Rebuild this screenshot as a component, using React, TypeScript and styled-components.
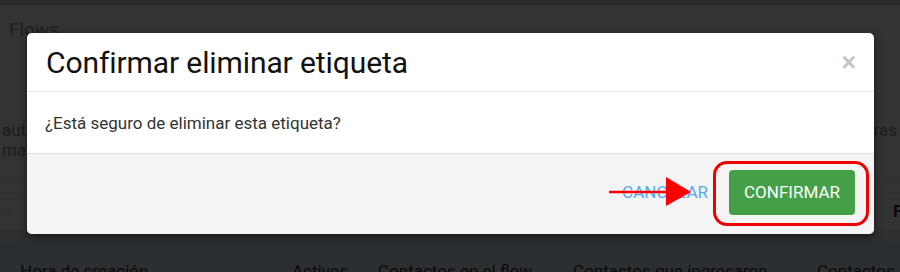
import React from "react";
import styled, { createGlobalStyle } from "styled-components";

const GlobalStyle = createGlobalStyle`
  html, body {
    margin: 0;
    padding: 0;
    background: #fff;
  }
  body {
    font-family: Roboto, "Noto Sans", "Liberation Sans", sans-serif;
    width: 900px;
    height: 272px;
    overflow: hidden;
  }
`;

const Page = styled.div`
  position: relative;
  width: 900px;
  height: 272px;
  overflow: hidden;
  background: #fff;
`;

const TopBar = styled.div`
  height: 5px;
  background: #d4d4d4;
`;

const PageTitle = styled.h1`
  margin: 14px 0 0;
  padding-left: 9px;
  font-size: 19px;
  line-height: 22px;
  font-weight: 400;
  color: #9a9a9a;
`;

const Description = styled.div`
  margin-top: 79px;
  font-size: 17px;
  line-height: 20px;
  color: #8a8a8a;
`;

const DescLine = styled.div`
  display: flex;
  justify-content: space-between;
  white-space: nowrap;
  padding: 0 3px 0 2px;
`;

const Toolbar = styled.div`
  margin-top: 18px;
  border-top: 1px solid #dcdcdc;
  padding-top: 13px;
`;

const ToolbarInner = styled.div`
  display: flex;
  align-items: center;
  justify-content: space-between;
  height: 36px;
  border-top: 1px solid #e2e2e2;
  font-size: 17px;
  color: #888;
`;

const Placeholder = styled.span`
  font-size: 11px;
  letter-spacing: 1px;
  padding-left: 1px;
`;

const FilterLabel = styled.span`
  font-weight: 700;
  color: #333;
  margin-right: -40px;
  width: 47px;
`;

const Band = styled.div`
  height: 14px;
  background: #ececec;
`;

const TableHead = styled.div`
  display: grid;
  grid-template-columns: 272px 86px 195px 244px 1fr;
  padding: 18px 0 0 20px;
  height: 40px;
  background: #d4e8f2;
  font-size: 17px;
  line-height: 20px;
  color: #333;
  white-space: nowrap;
`;

const Backdrop = styled.div`
  position: absolute;
  inset: 0;
  background: rgba(0, 0, 0, 0.8);
`;

const Modal = styled.div`
  position: absolute;
  left: 27px;
  top: 33px;
  width: 847px;
  height: 201px;
  background: #fff;
  border-radius: 5px;
  box-shadow: 0 3px 9px rgba(0, 0, 0, 0.5);
  display: flex;
  flex-direction: column;
  overflow: hidden;
`;

const ModalHeader = styled.div`
  display: flex;
  align-items: center;
  justify-content: space-between;
  height: 58px;
  padding: 0 19px;
  border-bottom: 1px solid #e5e5e5;
`;

const Title = styled.h2`
  margin: 0;
  font-size: 30px;
  font-weight: 400;
  color: #111;
  letter-spacing: -0.1px;
`;

const CloseButton = styled.button`
  border: none;
  background: none;
  padding: 0;
  margin-right: -1px;
  font-family: "Liberation Sans", Arial, sans-serif;
  font-size: 25px;
  font-weight: 700;
  line-height: 1;
  color: #c4c4c4;
  cursor: pointer;
`;

const ModalBody = styled.div`
  display: flex;
  align-items: center;
  height: 61px;
  padding: 0 18px;
  border-bottom: 1px solid #dedede;
  font-size: 17px;
  color: #333;
`;

const ModalFooter = styled.div`
  flex: 1;
  display: flex;
  align-items: center;
  justify-content: flex-end;
  padding: 0 19px 4px 0;
  background: #f4f4f4;
`;

const FlatButton = styled.button`
  position: relative;
  border: none;
  background: none;
  padding: 0;
  margin-right: 21px;
  font-family: Roboto, sans-serif;
  font-size: 17px;
  text-transform: uppercase;
  color: #52aaf2;
  cursor: pointer;
`;

const Arrow = styled.svg`
  position: absolute;
  left: -13px;
  top: 50%;
  margin-top: -15px;
  overflow: visible;
`;

const Highlight = styled.div`
  position: relative;
`;

const HighlightRing = styled.div`
  position: absolute;
  left: -16px;
  right: -14px;
  top: -9px;
  bottom: -11px;
  border: 3px solid #f20000;
  border-radius: 14px;
  pointer-events: none;
`;

const ConfirmButton = styled.button`
  width: 126px;
  height: 45px;
  border: none;
  border-radius: 4px;
  background: #43a047;
  color: #fff;
  font-family: Roboto, sans-serif;
  font-size: 17px;
  text-transform: uppercase;
  cursor: pointer;
`;

const App: React.FC = () => {
  return (
    <>
      <GlobalStyle />
      <Page>
        <TopBar />
        <PageTitle>Flows</PageTitle>
        <Description>
          <DescLine>
            <span>automáticos</span>
            <span>esperas</span>
          </DescLine>
          <DescLine>
            <span>matices</span>
          </DescLine>
        </Description>
        <Toolbar>
          <ToolbarInner>
            <Placeholder>...</Placeholder>
            <FilterLabel>Filtros</FilterLabel>
          </ToolbarInner>
        </Toolbar>
        <Band />
        <TableHead>
          <span>Hora de creación</span>
          <span>Activos</span>
          <span>Contactos en el flow</span>
          <span>Contactos que ingresaron</span>
          <span>Contactos</span>
        </TableHead>

        <Backdrop />

        <Modal>
          <ModalHeader>
            <Title>Confirmar eliminar etiqueta</Title>
            <CloseButton>&times;</CloseButton>
          </ModalHeader>
          <ModalBody>¿Está seguro de eliminar esta etiqueta?</ModalBody>
          <ModalFooter>
            <FlatButton>
              Cancelar
              <Arrow width="83" height="30" viewBox="0 0 83 30">
                <line x1="0" y1="15" x2="60" y2="15" stroke="#f00" strokeWidth="2.5" />
                <polygon points="57,0 82,15 57,29" fill="#f00" />
              </Arrow>
            </FlatButton>
            <Highlight>
              <ConfirmButton>Confirmar</ConfirmButton>
              <HighlightRing />
            </Highlight>
          </ModalFooter>
        </Modal>
      </Page>
    </>
  );
};

export default App;
